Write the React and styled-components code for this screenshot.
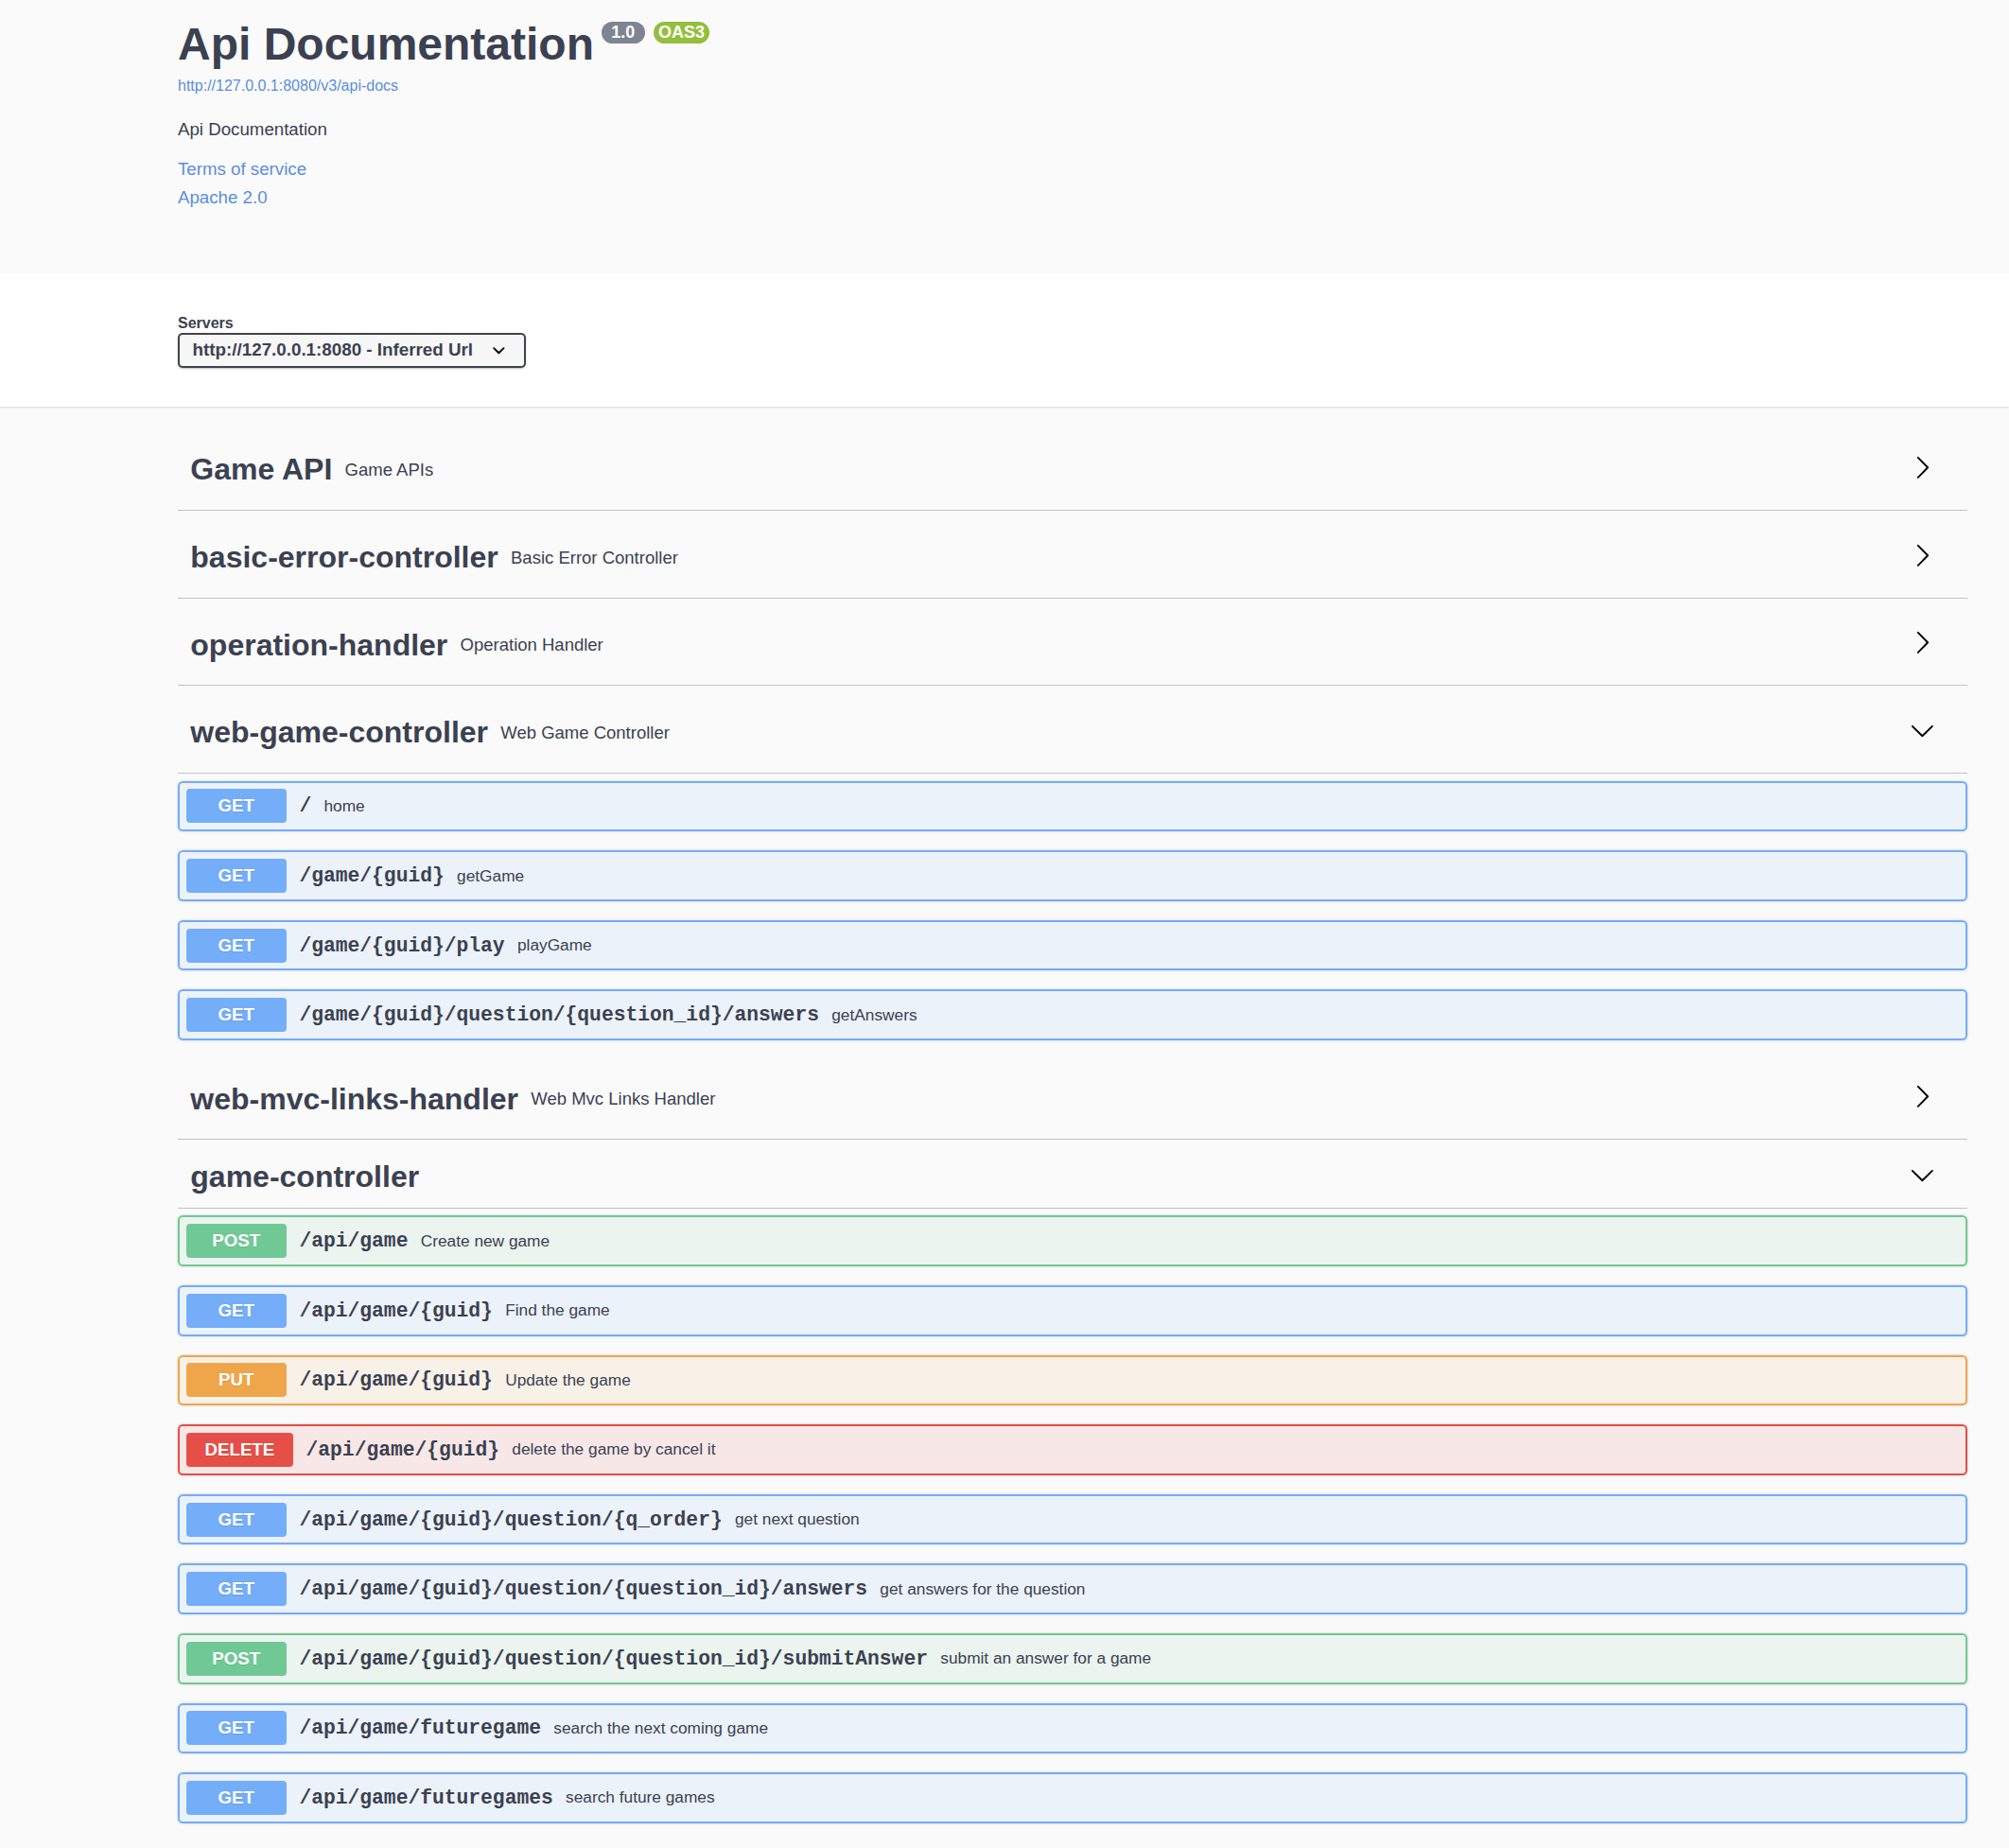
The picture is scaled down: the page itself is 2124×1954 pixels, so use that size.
import React from "react";
import styled, { createGlobalStyle } from "styled-components";

const GlobalStyle = createGlobalStyle`
  html, body { margin: 0; padding: 0; background: #fafafa; }
  body { font-family: "Liberation Sans", Arial, Helvetica, sans-serif; color: #3b4151; }
  * { box-sizing: border-box; }
`;

const TEXT = "#3b4151";
const LINK = "#5b8edc";

const Page = styled.div`
  min-height: 1954px;
  background: #fafafa;
`;

const Wrapper = styled.div`
  padding: 0 44px 0 188px;
`;

const InfoSection = styled.section`
  background: #fafafa;
  padding-top: 22.7px;
  padding-bottom: 70px;
`;

const TitleRow = styled.div`
  display: flex;
  align-items: flex-start;
  height: 48px;
`;

const Title = styled.h2`
  margin: 0;
  font-size: 48px;
  line-height: 48px;
  font-weight: 700;
  color: ${TEXT};
`;

const Badge = styled.span`
  display: inline-flex;
  align-items: center;
  justify-content: center;
  height: 23px;
  padding: 0 5.3px;
  margin-left: ${(p) => p.$ml}px;
  border-radius: 12px;
  background: ${(p) => p.$bg};
  color: #fff;
  font-size: 18px;
  font-weight: 700;
  line-height: 23px;
  white-space: pre;
`;

const UrlLink = styled.a`
  display: block;
  margin-top: 12.8px;
  font-size: 16px;
  line-height: 16px;
  color: ${LINK};
  text-decoration: none;
`;

const Desc = styled.p`
  margin: 28.7px 0 0;
  font-size: 18.7px;
  line-height: 18.7px;
  color: ${TEXT};
`;

const InfoLink = styled.a`
  display: block;
  margin-top: ${(p) => p.$mt}px;
  font-size: 18.7px;
  line-height: 18.7px;
  color: ${LINK};
  text-decoration: none;
`;

const SchemeSection = styled.section`
  background: #fff;
  padding: 45.5px 0 41px;
  box-shadow: 0 1px 2px 0 rgba(0, 0, 0, 0.15);
  position: relative;
`;

const ServersLabel = styled.div`
  font-size: 16px;
  line-height: 16px;
  font-weight: 700;
  color: ${TEXT};
  margin-bottom: 1.5px;
`;

const Select = styled.div`
  display: inline-flex;
  align-items: center;
  height: 37px;
  padding: 0 0 0 13.6px;
  border: 2px solid #41444e;
  border-radius: 5px;
  background: #f7f7f7;
  box-shadow: 0 1px 2px 0 rgba(0, 0, 0, 0.25);
  font-size: 18.8px;
  font-weight: 700;
  color: ${TEXT};
  white-space: nowrap;
`;

const SelectArrow = styled.svg`
  width: 26.7px;
  height: 26.7px;
  margin-left: 14px;
  margin-right: 13px;
  flex: none;
`;

const TagsArea = styled.div`
  padding-top: 25px;
`;

const TagRow = styled.div`
  display: flex;
  align-items: center;
  height: ${(p) => (p.$compact ? 65 : 85)}px;
  padding: 0 34px 0 13.3px;
  margin-bottom: 7.7px;
  border-bottom: 1.3px solid rgba(59, 65, 81, 0.3);
  cursor: pointer;
`;

const TagName = styled.h3`
  margin: 0;
  font-size: 32px;
  font-weight: 700;
  color: ${TEXT};
  white-space: nowrap;
`;

const TagDesc = styled.small`
  flex: 2;
  padding: 0 13.3px;
  font-size: 18.5px;
  font-weight: 400;
  color: ${TEXT};
`;

const Spacer = styled.div`
  flex: 2;
`;

const Arrow = styled.svg`
  width: 26.7px;
  height: 26.7px;
  flex: none;
  margin-bottom: 5px;
  fill: #000;
`;

const OpList = styled.div`
  display: flex;
  flex-direction: column;
`;

const COLORS = {
  GET: { main: "#74adf8", bg: "rgba(116,173,248,.1)" },
  POST: { main: "#70c995", bg: "rgba(112,201,149,.1)" },
  PUT: { main: "#efa54a", bg: "rgba(239,165,74,.1)" },
  DELETE: { main: "#e64f47", bg: "rgba(230,79,71,.1)" },
};

const OpBlock = styled.div`
  display: flex;
  align-items: center;
  height: 53.6px;
  padding: 0 6.5px;
  margin-bottom: 20px;
  border: 2px solid ${(p) => COLORS[p.$method].main};
  border-radius: 5.3px;
  background: ${(p) => COLORS[p.$method].bg};
  box-shadow: 0 0 3px rgba(0, 0, 0, 0.19);
`;

const MethodBadge = styled.span`
  display: inline-flex;
  align-items: center;
  justify-content: center;
  min-width: 106.6px;
  height: 36px;
  padding: 0 20px;
  border-radius: 4px;
  background: ${(p) => COLORS[p.$method].main};
  color: #fff;
  font-size: 18.7px;
  font-weight: 700;
  text-shadow: 0 1px 0 rgba(0, 0, 0, 0.1);
`;

const OpPath = styled.span`
  padding: 0 13.3px;
  font-family: "Liberation Mono", "Courier New", monospace;
  font-size: 21.3px;
  font-weight: 700;
  color: ${TEXT};
  white-space: nowrap;
`;

const OpDesc = styled.span`
  font-size: 17.3px;
  color: ${TEXT};
  white-space: nowrap;
`;

const ArrowRight = () => (
  <Arrow viewBox="0 0 20 20">
    <path d="M13.25 10L6.109 2.58a.697.697 0 0 1 0-.979.68.68 0 0 1 .969 0l7.83 7.908a.697.697 0 0 1 0 .979l-7.83 7.908a.68.68 0 0 1-.969 0 .697.697 0 0 1 0-.979L13.25 10z" />
  </Arrow>
);

const ArrowDown = () => (
  <Arrow viewBox="0 0 20 20">
    <path d="M17.418 6.109c.272-.268.709-.268.979 0s.271.701 0 .969l-7.908 7.83c-.27.268-.707.268-.979 0l-7.908-7.83c-.27-.268-.27-.701 0-.969.271-.268.709-.268.979 0L10 13.25l7.418-7.141z" />
  </Arrow>
);

const tags = [
  { name: "Game API", desc: "Game APIs" },
  { name: "basic-error-controller", desc: "Basic Error Controller" },
  { name: "operation-handler", desc: "Operation Handler" },
  {
    name: "web-game-controller",
    desc: "Web Game Controller",
    ops: [
      ["GET", "/", "home"],
      ["GET", "/game/{guid}", "getGame"],
      ["GET", "/game/{guid}/play", "playGame"],
      ["GET", "/game/{guid}/question/{question_id}/answers", "getAnswers"],
    ],
  },
  { name: "web-mvc-links-handler", desc: "Web Mvc Links Handler" },
  {
    name: "game-controller",
    ops: [
      ["POST", "/api/game", "Create new game"],
      ["GET", "/api/game/{guid}", "Find the game"],
      ["PUT", "/api/game/{guid}", "Update the game"],
      ["DELETE", "/api/game/{guid}", "delete the game by cancel it"],
      ["GET", "/api/game/{guid}/question/{q_order}", "get next question"],
      ["GET", "/api/game/{guid}/question/{question_id}/answers", "get answers for the question"],
      ["POST", "/api/game/{guid}/question/{question_id}/submitAnswer", "submit an answer for a game"],
      ["GET", "/api/game/futuregame", "search the next coming game"],
      ["GET", "/api/game/futuregames", "search future games"],
    ],
  },
];

export default function App() {
  return (
    <Page>
      <GlobalStyle />
      <InfoSection>
        <Wrapper>
          <TitleRow>
            <Title>Api Documentation</Title>
            <Badge $bg="#7e8491" $ml={8}>{" 1.0 "}</Badge>
            <Badge $bg="#94be3b" $ml={9}>OAS3</Badge>
          </TitleRow>
          <UrlLink href="#">http://127.0.0.1:8080/v3/api-docs</UrlLink>
          <Desc>Api Documentation</Desc>
          <InfoLink href="#" $mt={23.3}>Terms of service</InfoLink>
          <InfoLink href="#" $mt={11.3}>Apache 2.0</InfoLink>
        </Wrapper>
      </InfoSection>
      <SchemeSection>
        <Wrapper>
          <ServersLabel>Servers</ServersLabel>
          <Select>
            http://127.0.0.1:8080 - Inferred Url
            <SelectArrow viewBox="0 0 20 20">
              <path
                fill="#000"
                d="M13.418 7.859a.695.695 0 0 1 .978 0 .68.68 0 0 1 0 .969l-3.908 3.83a.697.697 0 0 1-.979 0l-3.908-3.83a.68.68 0 0 1 0-.969.695.695 0 0 1 .978 0L10 11l3.418-3.141z"
              />
            </SelectArrow>
          </Select>
        </Wrapper>
      </SchemeSection>
      <Wrapper>
        <TagsArea>
          {tags.map((t) => (
            <section key={t.name}>
              <TagRow $compact={!t.desc}>
                <TagName>{t.name}</TagName>
                {t.desc ? <TagDesc>{t.desc}</TagDesc> : <Spacer />}
                {t.ops ? <ArrowDown /> : <ArrowRight />}
              </TagRow>
              {t.ops && (
                <OpList>
                  {t.ops.map(([m, path, d], i) => (
                    <OpBlock key={i} $method={m}>
                      <MethodBadge $method={m}>{m}</MethodBadge>
                      <OpPath>{path}</OpPath>
                      <OpDesc>{d}</OpDesc>
                    </OpBlock>
                  ))}
                </OpList>
              )}
            </section>
          ))}
        </TagsArea>
      </Wrapper>
    </Page>
  );
}
